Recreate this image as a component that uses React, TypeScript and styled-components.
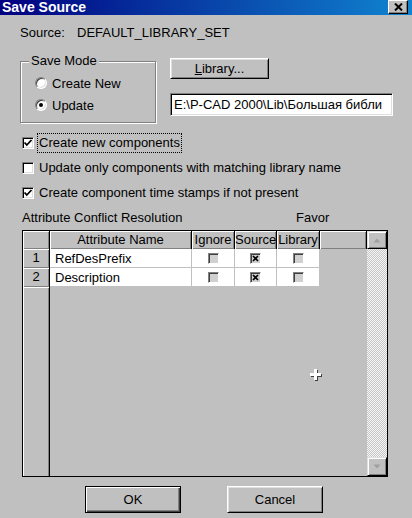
import React from "react";
import styled, { createGlobalStyle } from "styled-components";

const Global = createGlobalStyle`
  html, body { margin: 0; padding: 0; background: #c0c0c0; }
  body {
    font-family: "Liberation Sans", Arial, sans-serif;
    font-size: 13px;
    color: #000;
  }
  * { box-sizing: border-box; }
`;

const Dialog = styled.div`
  position: relative;
  width: 412px;
  height: 518px;
  overflow: hidden;
  background: #c0c0c0;
  display: flex;
  flex-direction: column;
`;

const TitleBar = styled.div`
  height: 15px;
  flex: none;
  background: linear-gradient(to right, #000080, #1084d0);
  display: flex;
  align-items: flex-start;
  justify-content: space-between;
  padding: 0 4px 0 2px;
`;

const TitleText = styled.div`
  color: #fff;
  font-weight: bold;
  font-size: 14px;
  line-height: 14px;
`;

const CloseButton = styled.div`
  width: 20px;
  height: 14px;
  background: #c0c0c0;
  border: 1px solid;
  border-color: #fff #000 #000 #fff;
  box-shadow: inset -1px -1px #808080;
  display: flex;
  align-items: center;
  justify-content: center;
`;

const Body = styled.div`
  flex: 1;
  display: flex;
  flex-direction: column;
  padding: 10px 19px 0 20px;
`;

const SourceRow = styled.div`
  display: flex;
  line-height: 16px;
`;

const SourceLabel = styled.span`
  width: 57px;
`;

const TopSection = styled.div`
  display: flex;
  align-items: flex-start;
  margin-top: 11px;
`;

const GroupBox = styled.div`
  position: relative;
  width: 136px;
  margin-top: 9px;
  border: 1px solid #808080;
  box-shadow: inset 1px 1px #fff, 1px 1px #fff;
  padding: 13px 0 9px 14px;
  display: flex;
  flex-direction: column;
  gap: 6px;
`;

const Legend = styled.span`
  position: absolute;
  top: -9px;
  left: 8px;
  padding: 0 2px;
  background: #c0c0c0;
  line-height: 16px;
`;

const RadioRow = styled.div`
  display: flex;
  align-items: center;
  height: 16px;
  gap: 5px;
`;

const RadioCircle = styled.span<{ $checked?: boolean }>`
  width: 12px;
  height: 12px;
  border-radius: 50%;
  background: #fff;
  border: 1px solid;
  border-color: #808080 #fff #fff #808080;
  box-shadow: inset 1px 1px #404040, inset -1px -1px #dfdfdf;
  display: flex;
  align-items: center;
  justify-content: center;
  &::after {
    content: "";
    width: 4px;
    height: 4px;
    border-radius: 50%;
    background: ${(p) => (p.$checked ? "#000" : "transparent")};
  }
`;

const RightColumn = styled.div`
  margin-left: 14px;
  margin-top: 6px;
  display: flex;
  flex-direction: column;
  gap: 14px;
`;

const WinButton = styled.div<{ $w: number; $h: number; $default?: boolean }>`
  width: ${(p) => p.$w}px;
  height: ${(p) => p.$h}px;
  background: #c0c0c0;
  border: 1px solid;
  border-color: ${(p) => (p.$default ? "#000" : "#fff #000 #000 #fff")};
  box-shadow: ${(p) =>
    p.$default
      ? "inset 1px 1px #fff, inset -1px -1px #404040, inset -2px -2px #808080"
      : "inset 1px 1px #dfdfdf, inset -1px -1px #808080"};
  display: flex;
  align-items: center;
  justify-content: center;
  line-height: 16px;
`;

const Underlined = styled.span`
  text-decoration: underline;
`;

const TextField = styled.div`
  width: 223px;
  height: 23px;
  background: #fff;
  border: 1px solid;
  border-color: #808080 #fff #fff #808080;
  box-shadow: inset 1px 1px #000, inset -1px -1px #dfdfdf;
  padding-left: 3px;
  line-height: 21px;
  white-space: nowrap;
  overflow: hidden;
`;

const CheckList = styled.div`
  display: flex;
  flex-direction: column;
  gap: 5px;
  margin-top: 10px;
`;

const CheckRow = styled.div`
  display: flex;
  align-items: center;
  height: 20px;
  padding-left: 2px;
`;

const CheckBoxBox = styled.span`
  width: 12px;
  height: 12px;
  flex: none;
  background: #fff;
  border: 1px solid;
  border-color: #808080 #fff #fff #808080;
  box-shadow: inset 1px 1px #000, inset -1px -1px #dfdfdf;
  display: flex;
  align-items: center;
  justify-content: center;
`;

const CheckLabel = styled.span<{ $focus?: boolean }>`
  margin-left: 3px;
  padding: 0 1px;
  line-height: 18px;
  border: 1px dotted ${(p) => (p.$focus ? "#000" : "transparent")};
  white-space: nowrap;
`;

const ConflictRow = styled.div`
  display: flex;
  line-height: 16px;
  margin-top: 7px;
  padding-left: 2px;
`;

const ConflictLabel = styled.span`
  width: 274px;
`;

const Grid = styled.div`
  margin-top: 4px;
  margin-left: 2px;
  width: 366px;
  height: 247px;
  border: 1px solid #000;
  display: flex;
`;

const GridMain = styled.div`
  flex: 1;
  display: flex;
  flex-direction: column;
`;

const GridRow = styled.div<{ $h: number }>`
  display: flex;
  height: ${(p) => p.$h}px;
  flex: none;
`;

const HeaderCell = styled.div<{ $w: number }>`
  width: ${(p) => p.$w}px;
  flex: none;
  background: #c0c0c0;
  border-right: 1px solid #000;
  box-shadow: inset 1px 1px #fff, inset -1px -1px #808080;
  text-align: center;
  line-height: 18px;
  overflow: hidden;
  white-space: nowrap;
`;

const DataCell = styled.div<{ $w: number; $center?: boolean }>`
  width: ${(p) => p.$w}px;
  flex: none;
  background: #fff;
  border-right: 1px solid #c0c0c0;
  border-bottom: 1px solid #c0c0c0;
  display: flex;
  align-items: center;
  justify-content: ${(p) => (p.$center ? "center" : "flex-start")};
  padding-left: ${(p) => (p.$center ? 0 : 5)}px;
  white-space: nowrap;
  overflow: hidden;
`;

const RowHeaderFill = styled.div`
  flex: 1;
  display: flex;
`;

const RowHeaderColumn = styled.div`
  width: 27px;
  background: #c0c0c0;
  border-right: 1px solid #000;
  box-shadow: inset 1px 1px #fff, inset -1px 0 #808080;
`;

const GridCheck = styled.span`
  width: 11px;
  height: 11px;
  background: #d0d0d0;
  border: 1px solid;
  border-color: #808080 #fff #fff #808080;
  box-shadow: inset 1px 1px #404040;
  display: flex;
  align-items: center;
  justify-content: center;
`;

const ScrollBar = styled.div`
  width: 20px;
  flex: none;
  display: flex;
  flex-direction: column;
`;

const ScrollButton = styled.div<{ $h: number }>`
  height: ${(p) => p.$h}px;
  flex: none;
  background: #c0c0c0;
  border: 1px solid;
  border-color: #dfdfdf #000 #000 #dfdfdf;
  box-shadow: inset 1px 1px #fff, inset -1px -1px #808080;
  display: flex;
  align-items: center;
  justify-content: center;
`;

const ScrollTrack = styled.div`
  flex: 1;
  background: repeating-conic-gradient(#c8c8c8 0 25%, #f4f4f4 0 50%) 0 0 / 2px 2px;
`;

const ButtonRow = styled.div`
  display: flex;
  gap: 46px;
  margin-top: 9px;
  padding-left: 65px;
`;

const Cursor = styled.svg`
  position: absolute;
  left: 309px;
  top: 368px;
`;

const Check = () => (
  <svg width="10" height="10" viewBox="0 0 10 10">
    <polyline points="1.5,4.5 3.8,7 8.5,2" fill="none" stroke="#000" strokeWidth="1.8" />
  </svg>
);

const XMark = () => (
  <svg width="9" height="9" viewBox="0 0 9 9">
    <path d="M2 2 L7 7 M7 2 L2 7" stroke="#000" strokeWidth="1.7" />
  </svg>
);

const columns = [
  { key: "name", w: 142, label: "Attribute Name" },
  { key: "ignore", w: 43, label: "Ignore" },
  { key: "source", w: 42, label: "Source" },
  { key: "library", w: 43, label: "Library" },
];

const rows = [
  { n: "1", name: "RefDesPrefix", ignore: false, source: true, library: false },
  { n: "2", name: "Description", ignore: false, source: true, library: false },
];

export default function App() {
  return (
    <>
      <Global />
      <Dialog>
        <TitleBar>
          <TitleText>Save Source</TitleText>
          <CloseButton>
            <svg width="9" height="8" viewBox="0 0 9 8">
              <path d="M1 0.5 L8 7.5 M8 0.5 L1 7.5" stroke="#000" strokeWidth="2" />
            </svg>
          </CloseButton>
        </TitleBar>
        <Body>
          <SourceRow>
            <SourceLabel>Source:</SourceLabel>
            <span>DEFAULT_LIBRARY_SET</span>
          </SourceRow>
          <TopSection>
            <GroupBox>
              <Legend>Save Mode</Legend>
              <RadioRow>
                <RadioCircle />
                <span>Create New</span>
              </RadioRow>
              <RadioRow>
                <RadioCircle $checked />
                <span>Update</span>
              </RadioRow>
            </GroupBox>
            <RightColumn>
              <WinButton $w={99} $h={21}>
                <span>
                  <Underlined>L</Underlined>ibrary...
                </span>
              </WinButton>
              <TextField>E:\P-CAD 2000\Lib\Большая библи</TextField>
            </RightColumn>
          </TopSection>
          <CheckList>
            <CheckRow>
              <CheckBoxBox>
                <Check />
              </CheckBoxBox>
              <CheckLabel $focus>Create new components</CheckLabel>
            </CheckRow>
            <CheckRow>
              <CheckBoxBox />
              <CheckLabel>Update only components with matching library name</CheckLabel>
            </CheckRow>
            <CheckRow>
              <CheckBoxBox>
                <Check />
              </CheckBoxBox>
              <CheckLabel>Create component time stamps if not present</CheckLabel>
            </CheckRow>
          </CheckList>
          <ConflictRow>
            <ConflictLabel>Attribute Conflict Resolution</ConflictLabel>
            <span>Favor</span>
          </ConflictRow>
          <Grid>
            <GridMain>
              <GridRow $h={18}>
                <HeaderCell $w={27} />
                {columns.map((c) => (
                  <HeaderCell key={c.key} $w={c.w}>
                    {c.label}
                  </HeaderCell>
                ))}
                <HeaderCell $w={47} />
              </GridRow>
              {rows.map((r) => (
                <GridRow key={r.n} $h={19}>
                  <HeaderCell $w={27}>{r.n}</HeaderCell>
                  <DataCell $w={142}>{r.name}</DataCell>
                  <DataCell $w={43} $center>
                    <GridCheck>{r.ignore && <XMark />}</GridCheck>
                  </DataCell>
                  <DataCell $w={42} $center>
                    <GridCheck>{r.source && <XMark />}</GridCheck>
                  </DataCell>
                  <DataCell $w={43} $center>
                    <GridCheck>{r.library && <XMark />}</GridCheck>
                  </DataCell>
                </GridRow>
              ))}
              <RowHeaderFill>
                <RowHeaderColumn />
              </RowHeaderFill>
            </GridMain>
            <ScrollBar>
              <ScrollButton $h={18}>
                <svg width="8" height="5" viewBox="0 0 8 5">
                  <polygon points="4,0.5 7.5,4.5 0.5,4.5" fill="#a0a0a0" />
                </svg>
              </ScrollButton>
              <ScrollTrack />
              <ScrollButton $h={19}>
                <svg width="8" height="5" viewBox="0 0 8 5">
                  <polygon points="0.5,0.5 7.5,0.5 4,4.5" fill="#a0a0a0" />
                </svg>
              </ScrollButton>
            </ScrollBar>
          </Grid>
          <ButtonRow>
            <WinButton $w={96} $h={27} $default>
              OK
            </WinButton>
            <WinButton $w={96} $h={27}>
              Cancel
            </WinButton>
          </ButtonRow>
        </Body>
        <Cursor width="13" height="13" viewBox="0 0 13 13">
          <polygon
            points="5,1 8,1 8,5 12,5 12,8 8,8 8,12 5,12 5,8 1,8 1,5 5,5"
            fill="#404040"
            transform="translate(1 1)"
          />
          <polygon points="5,1 8,1 8,5 12,5 12,8 8,8 8,12 5,12 5,8 1,8 1,5 5,5" fill="#fff" />
        </Cursor>
      </Dialog>
    </>
  );
}
